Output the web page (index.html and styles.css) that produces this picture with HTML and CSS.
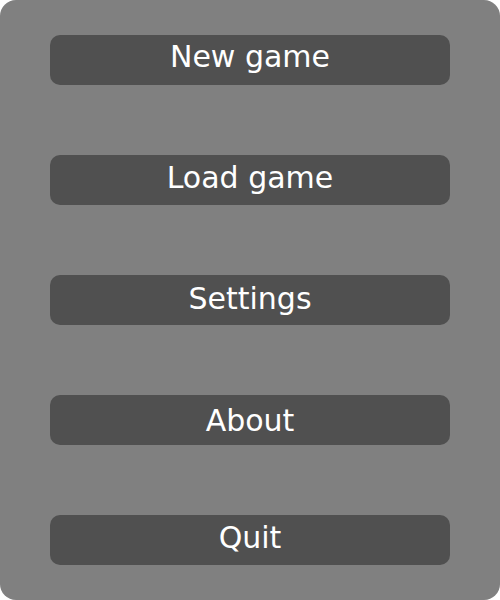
FILE: index.html
```html
<!DOCTYPE html>
<html>
<head>
<meta charset="utf-8">
<link rel="stylesheet" href="styles.css">
</head>
<body>
<div class="menu">
  <div class="btn"><span class="label label-new">New game</span></div>
  <div class="btn"><span class="label label-load">Load game</span></div>
  <div class="btn"><span class="label label-settings">Settings</span></div>
  <div class="btn"><span class="label label-about">About</span></div>
  <div class="btn"><span class="label label-quit">Quit</span></div>
</div>
</body>
</html>
```

FILE: styles.css
```css
html, body {
  margin: 0;
  padding: 0;
  background: #ffffff;
}
.menu {
  width: 500px;
  height: 600px;
  box-sizing: border-box;
  background: #808080;
  border-radius: 16px;
  padding-top: 35px;
  display: flex;
  flex-direction: column;
  align-items: center;
  gap: 70px;
}
.btn {
  width: 400px;
  height: 50px;
  background: #505050;
  border-radius: 10px;
  color: #ffffff;
  font-family: "DejaVu Sans", sans-serif;
  font-size: 30px;
  line-height: 1;
  display: flex;
  align-items: center;
  justify-content: center;
}
.label {
  display: block;
}
.label-new { margin-bottom: 7px; }
.label-load { margin-bottom: 4px; }
.label-settings { margin-bottom: 3px; }
.label-about { margin-top: 1px; }
.label-quit { margin-bottom: 5px; }
```
